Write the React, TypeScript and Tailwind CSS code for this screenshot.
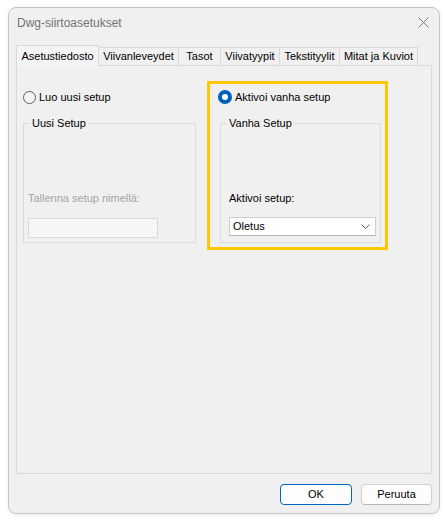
import * as React from 'react';

interface ITab {
  label: string;
  width: string;
  active?: boolean;
}

const tabs: ITab[] = [
  { label: 'Asetustiedosto', width: 'w-[83px]', active: true },
  { label: 'Viivanleveydet', width: 'w-[80px]' },
  { label: 'Tasot', width: 'w-[42px]' },
  { label: 'Viivatyypit', width: 'w-[59px]' },
  { label: 'Tekstityylit', width: 'w-[60px]' },
  { label: 'Mitat ja Kuviot', width: 'w-[78px]' },
];

const Radio: React.FunctionComponent<{ checked?: boolean; label: string }> = ({ checked, label }) => (
  <label className="flex h-[26px] items-center gap-[3px]">
    {checked ? (
      <span className="flex h-[14px] w-[14px] items-center justify-center rounded-full bg-[#005fb8]">
        <span className="h-[6px] w-[6px] rounded-full bg-white" />
      </span>
    ) : (
      <span className="h-[13px] w-[13px] rounded-full border border-[#5c5c5c] bg-[#f6f6f6]" />
    )}
    <span className="leading-[14px] text-black">{label}</span>
  </label>
);

const GroupBox: React.FunctionComponent<{ title: string; className?: string; children?: React.ReactNode }> = ({
  title,
  className,
  children,
}) => (
  <div className={`relative flex h-[120px] flex-col justify-end border border-[#dcdcdc] ${className || ''}`}>
    <span className="absolute -top-[8px] left-[6px] bg-[#f0f0f0] px-[2px] leading-[14px] text-black">{title}</span>
    {children}
  </div>
);

const Tab: React.FunctionComponent<ITab & { first?: boolean }> = ({ label, width, active }) =>
  active ? (
    <div
      className={`relative z-10 -mb-px flex h-[21px] items-center justify-center border border-b-0 border-[#d9d9d9] bg-[#f4f4f4] ${width}`}
    >
      {label}
    </div>
  ) : (
    <div className={`flex h-[18px] items-center justify-center border-t border-r border-[#d9d9d9] bg-[#f0f0f0] ${width}`}>
      {label}
    </div>
  );

export default function App() {
  return (
    <div
      className="h-[520px] w-[445px] bg-white pt-[7px] pl-[8px] text-[11px] text-black"
      style={{ fontFamily: '"Liberation Sans", Arial, sans-serif' }}
    >
      <div className="flex h-[507px] w-[432px] flex-col rounded-[8px] border border-[#c4c4c4] bg-[#f0f0f0] shadow-[0_1px_4px_rgba(0,0,0,0.08)]">
        {/* title bar */}
        <div className="flex h-[29px] items-center justify-between pr-[10px] pl-[8px]">
          <span className="text-[12px] text-[#737373]">Dwg-siirtoasetukset</span>
          <svg width="11" height="11" viewBox="0 0 11 11">
            <path d="M0.5 0.5L10.5 10.5M10.5 0.5L0.5 10.5" stroke="#7a7a7a" strokeWidth="1" />
          </svg>
        </div>

        {/* tabs */}
        <div className="mt-[8px] flex h-[20px] items-end px-[7px]">
          {tabs.map((tab) => (
            <Tab key={tab.label} {...tab} />
          ))}
        </div>

        {/* tab page */}
        <div className="mx-[7px] flex h-[409px] items-start border border-[#d9d9d9] bg-[#f0f0f0] pt-[15px] pl-[6px]">
          <div className="flex w-[173px] flex-col pt-[3px]">
            <Radio label="Luo uusi setup" />
            <GroupBox title="Uusi Setup" className="mt-[13px] w-[173px] pb-[4px] pl-[4px]">
              <span className="leading-[14px] text-[#a3a3a3]">Tallenna setup nimellä:</span>
              <div className="mt-[13px] h-[20px] w-[130px] border border-[#d9d9d9] bg-[#f6f6f6]" />
            </GroupBox>
          </div>

          <div className="ml-[11px] flex h-[169px] w-[181px] flex-col border-[3px] border-[#ffc800] pl-[8px]">
            <Radio checked label="Aktivoi vanha setup" />
            <GroupBox title="Vanha Setup" className="mt-[13px] ml-[2px] w-[161px] pb-[6px] pl-[8px]">
              <span className="leading-[14px]">Aktivoi setup:</span>
              <div className="mt-[12px] flex h-[19px] w-[147px] items-center justify-between border border-[#cfcfcf] border-b-[#b5b5b5] bg-white pr-[5px] pl-[3px]">
                <span>Oletus</span>
                <svg width="9" height="5" viewBox="0 0 9 5">
                  <path d="M0.5 0.5L4.5 4.5L8.5 0.5" fill="none" stroke="#606060" strokeWidth="1" />
                </svg>
              </div>
            </GroupBox>
          </div>
        </div>

        {/* dialog buttons */}
        <div className="mt-[10px] flex justify-end gap-[9px] pr-[7px]">
          <button className="h-[21px] w-[72px] rounded-[4px] border border-[#0067c0] bg-[#fdfdfd] text-black">OK</button>
          <button className="h-[21px] w-[71px] rounded-[4px] border border-[#d0d0d0] border-b-[#b8b8b8] bg-[#fdfdfd] text-black">
            Peruuta
          </button>
        </div>
      </div>
    </div>
  );
}
